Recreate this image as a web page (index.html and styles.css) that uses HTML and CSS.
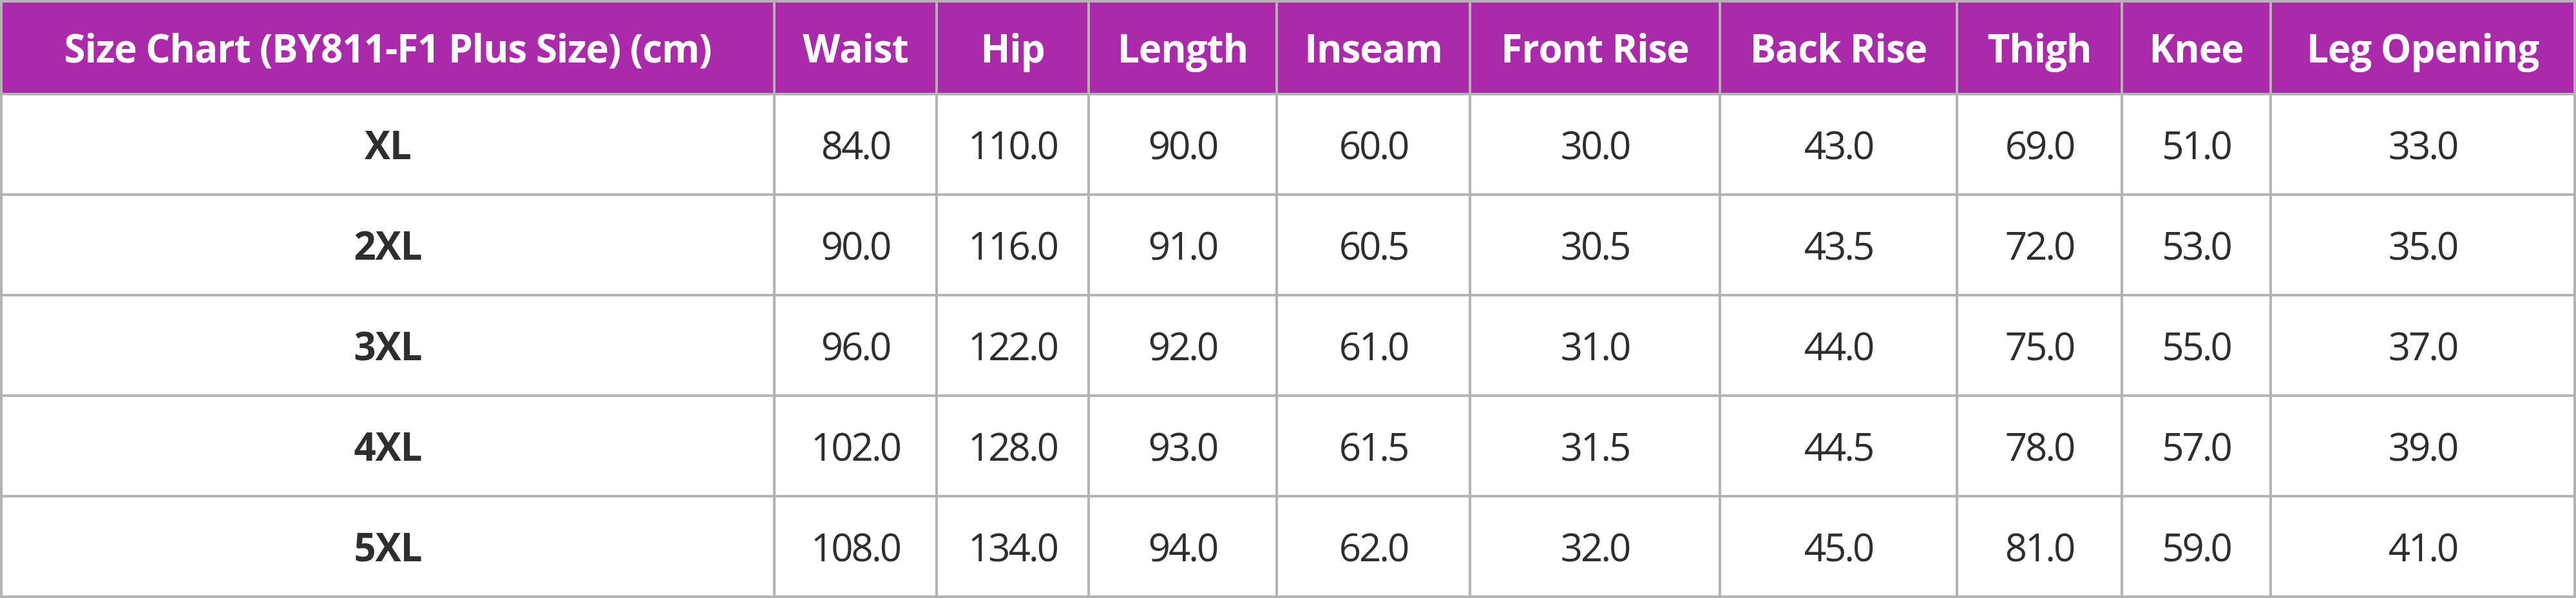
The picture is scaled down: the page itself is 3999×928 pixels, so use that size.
FILE: index.html
```html
<!DOCTYPE html>
<html lang="en">
<head>
<meta charset="utf-8">
<title>Size Chart (BY811-F1 Plus Size)</title>
<link rel="stylesheet" href="styles.css">
</head>
<body>
<table class="chart">
  <colgroup>
    <col class="c-size">
    <col class="c-waist">
    <col class="c-hip">
    <col class="c-length">
    <col class="c-inseam">
    <col class="c-front">
    <col class="c-back">
    <col class="c-thigh">
    <col class="c-knee">
    <col class="c-leg">
  </colgroup>
  <thead>
    <tr>
      <th>Size Chart (BY811-F1 Plus Size) (cm)</th>
      <th>Waist</th>
      <th>Hip</th>
      <th>Length</th>
      <th>Inseam</th>
      <th>Front Rise</th>
      <th>Back Rise</th>
      <th>Thigh</th>
      <th>Knee</th>
      <th>Leg Opening</th>
    </tr>
  </thead>
  <tbody>
    <tr><td class="size">XL</td><td>84.0</td><td>110.0</td><td>90.0</td><td>60.0</td><td>30.0</td><td>43.0</td><td>69.0</td><td>51.0</td><td>33.0</td></tr>
    <tr><td class="size">2XL</td><td>90.0</td><td>116.0</td><td>91.0</td><td>60.5</td><td>30.5</td><td>43.5</td><td>72.0</td><td>53.0</td><td>35.0</td></tr>
    <tr><td class="size">3XL</td><td>96.0</td><td>122.0</td><td>92.0</td><td>61.0</td><td>31.0</td><td>44.0</td><td>75.0</td><td>55.0</td><td>37.0</td></tr>
    <tr><td class="size">4XL</td><td>102.0</td><td>128.0</td><td>93.0</td><td>61.5</td><td>31.5</td><td>44.5</td><td>78.0</td><td>57.0</td><td>39.0</td></tr>
    <tr><td class="size">5XL</td><td>108.0</td><td>134.0</td><td>94.0</td><td>62.0</td><td>32.0</td><td>45.0</td><td>81.0</td><td>59.0</td><td>41.0</td></tr>
  </tbody>
</table>
</body>
</html>
```
FILE: styles.css
```css
html, body {
  margin: 0;
  padding: 0;
  background: #ffffff;
}

.chart {
  table-layout: fixed;
  width: 3999px;
  border-collapse: separate;
  border-spacing: 0;
  border-top: 4px solid #b3b3b3;
  border-left: 4px solid #b3b3b3;
  font-family: "Open Sans", "Noto Sans", sans-serif;
  font-size: 60px;
  color: #2e2e2e;
}

.chart th,
.chart td {
  box-sizing: border-box;
  padding: 0;
  text-align: center;
  vertical-align: middle;
  border-right: 4px solid #b3b3b3;
  border-bottom: 4px solid #b3b3b3;
  white-space: nowrap;
  overflow: hidden;
}

.chart th {
  height: 144px;
  background: #ab29ab;
  color: #ffffff;
  font-weight: 700;
  letter-spacing: -1px;
}

.chart td {
  height: 156px;
  font-weight: 400;
  letter-spacing: -3px;
}

.chart td.size {
  font-weight: 700;
  letter-spacing: -1px;
}

.c-size { width: 1200px; }
.c-waist { width: 252px; }
.c-hip { width: 236px; }
.c-length { width: 292px; }
.c-inseam { width: 300px; }
.c-front { width: 388px; }
.c-back { width: 368px; }
.c-thigh { width: 256px; }
.c-knee { width: 231px; }
.c-leg { width: 472px; }
```
